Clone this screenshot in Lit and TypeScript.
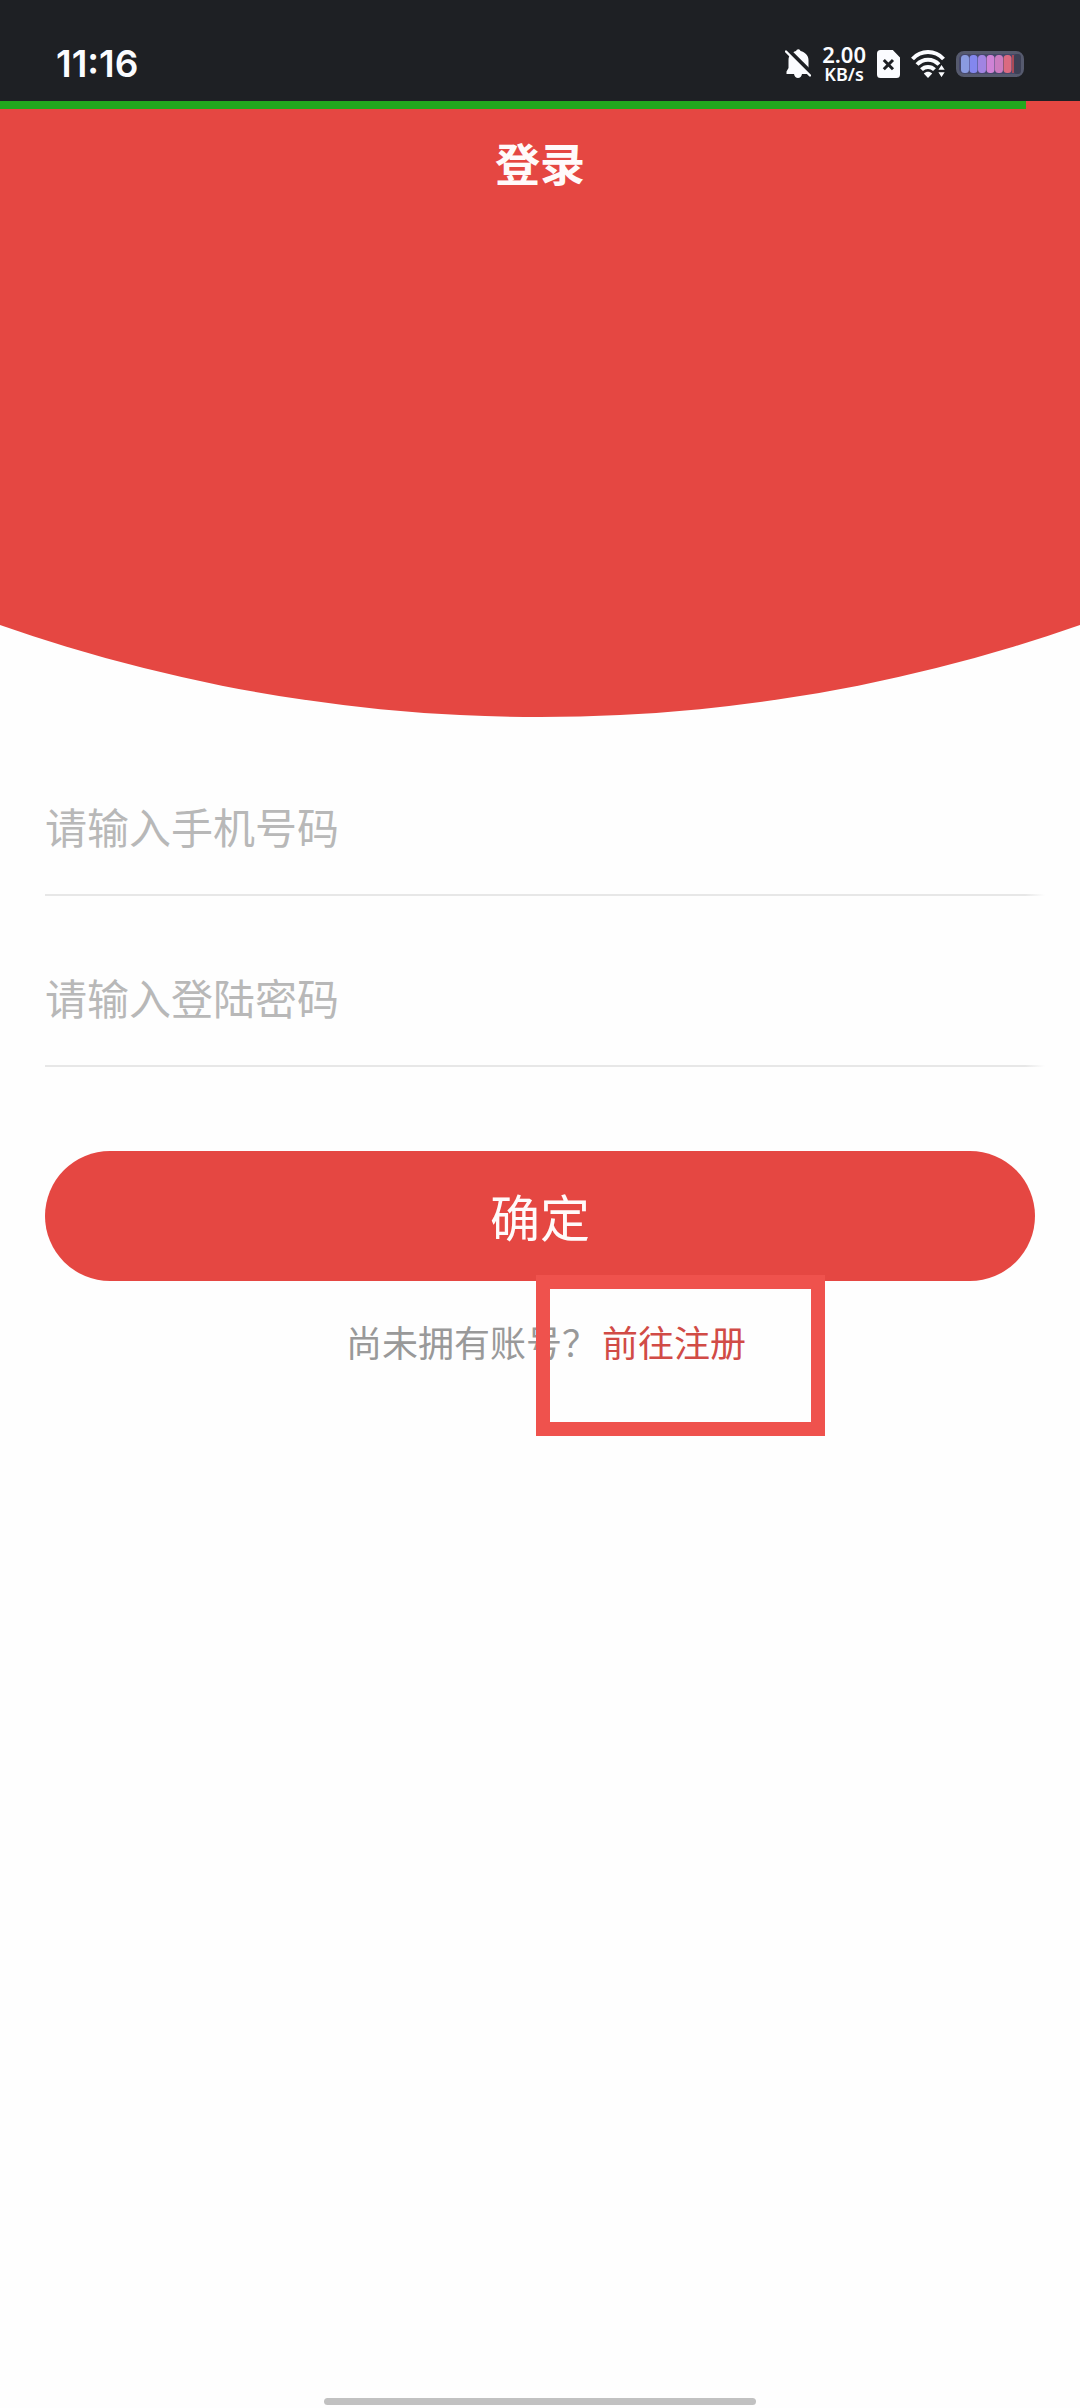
import { LitElement, html, css, svg } from "lit";
import { customElement, state } from "lit/decorators.js";

const CELLS = ["#8a9be0", "#8387ee", "#a184e2", "#cf83d6", "#cb7cc0", "#db6a80"];

@customElement("status-bar")
class StatusBar extends LitElement {
  static styles = css`
    :host {
      display: flex;
      align-items: center;
      justify-content: space-between;
      box-sizing: border-box;
      height: 101px;
      padding: 27px 56px 0;
      background: #1e2024;
      color: #fbfcff;
    }
    .time {
      font: 600 37px/40px Inter, "Noto Sans", sans-serif;
    }
    .icons {
      display: flex;
      align-items: center;
      gap: 11px;
    }
    .rate {
      display: flex;
      flex-direction: column;
      align-items: center;
      font: 600 22px/20px "Noto Sans", sans-serif;
    }
    .unit {
      font-size: 18px;
    }
    svg {
      display: block;
    }
  `;

  render() {
    return html`
      <span class="time">11:16</span>
      <div class="icons">
        <svg width="26" height="30" viewBox="0 0 26 30" aria-hidden="true">
          <path fill="#fbfcff" d="M11 2a2.400 2.400 0 0 1 4.600 0C20 3.200 23.500 6.500 23.500 11v8l1.500 3.500v2.500H1.500v-2.500L3.500 19v-8C3.500 6.500 7 3.200 11 2zM9 25h8c-.5 2.800-2 4.100-4 4.100s-3.500-1.300-4-4.100z" />
          <path d="M2 0 28 26" stroke="#1e2024" stroke-width="4.500" />
          <path d="M1 2.500 25 26.500" stroke="#fbfcff" stroke-width="2.400" stroke-linecap="round" />
        </svg>
        <div class="rate"><span>2.00</span><span class="unit">KB/s</span></div>
        <svg width="23" height="28" viewBox="0 0 23 28" aria-hidden="true">
          <path fill="#fbfcff" d="M3.500 0h12.300L23 7.500v17A3.500 3.500 0 0 1 19.500 28h-16A3.500 3.500 0 0 1 0 24.500v-21A3.500 3.500 0 0 1 3.500 0z" />
          <path d="M6.800 10 16 19.200M16 10 6.800 19.200" stroke="#1e2024" stroke-width="3" />
        </svg>
        <svg width="34" height="28" viewBox="0 0 34 28" aria-hidden="true">
          <g fill="none" stroke="#fbfcff" stroke-width="4">
            <path d="M1.500 9C10-.2 24-.2 32.500 9" />
            <path d="M6 14.500C12 8 22 8 28 14.500" />
            <path d="M10.500 19.700C14 16 20 16 23.500 19.700" />
          </g>
          <path fill="#fbfcff" d="M12.800 23.400c2.500-2.200 5.900-2.200 8.400 0L17 28z" />
          <path fill="#fbfcff" stroke="#1e2024" stroke-width="1.500" d="M30.500 13.500 35 20.500H26zM30.500 28.500 35 21.500H26z" />
        </svg>
        <svg width="68" height="26" viewBox="0 0 68 26" aria-hidden="true">
          <rect x="1.500" y="1.500" width="65" height="23" rx="6.500" fill="#46486a" stroke="#565a6e" stroke-width="3" />
          <rect x="58" y="3" width="7" height="20" rx="3" fill="#3d4055" />
          ${CELLS.map((c, i) => svg`<rect x=${5 + i * 8.500} y="4" width="8" height="18" rx="3.500" fill=${c} />`)}
          <rect x="56" y="4" width="2" height="18" fill="#a84a58" />
        </svg>
      </div>
    `;
  }
}

@customElement("app-root")
class AppRoot extends LitElement {
  @state() private phone = "";
  @state() private password = "";

  static styles = css`
    :host {
      display: flex;
      flex-direction: column;
      min-height: 100vh;
      background: #fefefe;
      font-family: "Noto Sans CJK SC", sans-serif;
    }
    .hero {
      height: 616px;
      background: #e54742;
      clip-path: ellipse(151% 1631px at 50% calc(100% - 1631px));
    }
    .progress {
      width: 95%;
      height: 8px;
      background: #21a81e;
    }
    .title {
      margin: 0;
      padding-top: 21px;
      color: #fffafa;
      font-size: 45px;
      font-weight: 700;
      line-height: 66px;
      text-align: center;
    }
    .form {
      display: flex;
      flex-direction: column;
      gap: 34px;
      padding: 42px 35px 0 45px;
    }
    .field {
      box-sizing: border-box;
      width: 100%;
      height: 137px;
      padding: 0 0 4px;
      border: 0;
      border-radius: 0;
      outline: 0;
      background: linear-gradient(to right, #e7e7e7 98%, transparent) bottom / 100% 2px no-repeat;
      color: #333333;
      font: 400 42px/60px "Noto Sans CJK SC", sans-serif;
    }
    .field::placeholder {
      color: #b8b8b8;
      opacity: 1;
    }
    .submit {
      height: 130px;
      margin: 50px 10px 0 0;
      padding: 0 0 2px;
      border: 0;
      border-radius: 65px;
      background: #e54742;
      color: #fffafa;
      font: 400 50px/72px "Noto Sans CJK SC", sans-serif;
    }
    .signup {
      display: flex;
      justify-content: center;
      margin: 33px 0 0;
      padding-left: 12px;
      color: #999999;
      font-size: 36px;
      line-height: 54px;
    }
    .target {
      position: relative;
      margin-left: 4px;
    }
    .link {
      color: #d14b46;
      text-decoration: none;
    }
    .frame {
      position: absolute;
      inset: -39px -79px -68px -66px;
      border: 14px solid #ef524d;
      pointer-events: none;
    }
    .home {
      width: 40%;
      height: 7px;
      margin: auto auto 3px;
      border-radius: 4px;
      background: #c1c1c1;
    }
  `;

  render() {
    return html`
      <status-bar></status-bar>
      <header class="hero">
        <div class="progress"></div>
        <h1 class="title">登录</h1>
      </header>
      <form class="form" @submit=${(e: Event) => e.preventDefault()}>
        <input class="field" type="tel" aria-label="请输入手机号码" placeholder="请输入手机号码"
          .value=${this.phone}
          @input=${(e: Event) => (this.phone = (e.target as HTMLInputElement).value)} />
        <input class="field" type="password" aria-label="请输入登陆密码" placeholder="请输入登陆密码"
          .value=${this.password}
          @input=${(e: Event) => (this.password = (e.target as HTMLInputElement).value)} />
        <button class="submit" type="submit">确定</button>
      </form>
      <p class="signup">
        <span>尚未拥有账号？</span>
        <span class="target"><a class="link" href="#register">前往注册</a><span class="frame"></span></span>
      </p>
      <div class="home"></div>
    `;
  }
}
